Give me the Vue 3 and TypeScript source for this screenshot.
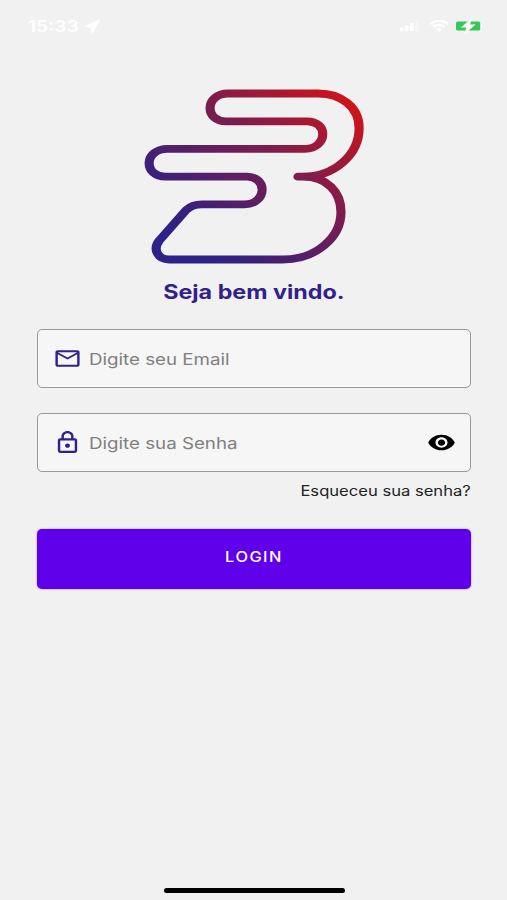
<script setup lang="ts">
import { ref } from 'vue'

const email = ref('')
const password = ref('')
const showPassword = ref(false)
</script>

<template>
  <main class="screen">
    <header class="status">
      <span class="time">15:33</span>
      <svg class="location" width="18" height="15" viewBox="0 0 16 13" aria-hidden="true">
        <path d="M15 .8 1 6.500l6.300.6.9 5.300z" fill="#fff" stroke="#fff" stroke-width=".8" stroke-linejoin="round" />
      </svg>
      <svg class="signal" width="19" height="12" viewBox="0 0 19 12" aria-hidden="true">
        <g fill="#fff">
          <rect x="0" y="7.5" width="3.6" height="3.7" rx=".8" />
          <rect x="5" y="5.5" width="3.6" height="5.7" rx=".8" />
          <rect x="10" y="3" width="3.6" height="8.2" rx=".8" />
          <rect x="15" y=".5" width="3.4" height="10.7" rx=".8" opacity=".35" />
        </g>
      </svg>
      <svg class="wifi" width="20" height="12" viewBox="0 0 20 12" aria-hidden="true">
        <g fill="none" stroke="#fff" stroke-width="2.4">
          <path d="M1 4.100C6-.2 14-.2 19 4.100" />
          <path d="M4.300 7c3.200-2.700 8.200-2.700 11.400 0" />
        </g>
        <path d="M7 9c1.800-1.300 4.200-1.300 6 0l-3 2.700z" fill="#fff" />
      </svg>
      <svg class="battery" width="28" height="14" viewBox="0 0 28 14" aria-hidden="true">
        <rect x="1" y="2.6" width="24.2" height="9" rx="1.5" fill="#34c85a" />
        <path d="M26.500 5v4" stroke="#fff" stroke-width="1.3" />
        <path d="M15.800.7 7.500 7.800h4.600L10.500 13.500l8.500-7.400h-4.700z" fill="#fff" stroke="#fff" stroke-width="1.2" />
      </svg>
    </header>

    <svg class="logo" viewBox="0 0 196.6 185" preserveAspectRatio="none" aria-label="B">
      <defs>
        <linearGradient id="brand" gradientUnits="userSpaceOnUse" x1="40" y1="165" x2="186" y2="20">
          <stop offset="0" stop-color="#2d2287" />
          <stop offset=".12" stop-color="#35217f" />
          <stop offset=".58" stop-color="#7d1c4e" />
          <stop offset="1" stop-color="#cf141a" />
        </linearGradient>
      </defs>
      <path
        d="M135 91.7H139C166 91.7 187.300 70 187.300 43C187.300 22 172 8.500 152 8.500H75.200C65.500 8.500 59.900 15.500 59.900 22.900C59.900 30.500 65.500 36.300 73.200 36.300H143C151 36.300 156.200 42 156.200 49C156.200 57 150.500 63.800 141 63.800H23.500C13.500 63.800 7.800 71 7.800 78C7.800 86 13.500 91.7 21.500 91.7H91.500C99.500 91.7 104.400 97.500 104.400 104.500C104.400 112.500 98.500 119.300 89.500 119.300H53C47 119.300 43 121 39.500 125L16.500 155.500C10.500 164.500 15.500 174.500 25 174.500H122C150 174.500 171.800 153 171.800 127C171.800 107 160 91.7 139 91.7"
        fill="none"
        stroke="url(#brand)"
        stroke-width="7.8"
        stroke-linecap="round"
        stroke-linejoin="round"
      />
    </svg>

    <h1 class="welcome"><span>Seja bem vindo.</span></h1>

    <form class="form" @submit.prevent>
      <label class="field">
        <svg class="icon" viewBox="0 0 24 24" preserveAspectRatio="none" aria-hidden="true">
          <path
            d="M22 6c0-1.100-.9-2-2-2H4c-1.100 0-2 .9-2 2v12c0 1.100.9 2 2 2h16c1.100 0 2-.9 2-2V6zm-2 0l-8 5-8-5h16zm0 12H4V8l8 5 8-5v10z"
            fill="#31218a"
          />
        </svg>
        <input v-model="email" class="email" type="email" placeholder="Digite seu Email" />
      </label>
      <label class="field">
        <svg class="icon" viewBox="0 0 24 24" preserveAspectRatio="none" aria-hidden="true">
          <path
            d="M18 8h-1V6c0-2.760-2.240-5-5-5S7 3.240 7 6v2H6c-1.100 0-2 .9-2 2v10c0 1.100.9 2 2 2h12c1.100 0 2-.9 2-2V10c0-1.100-.9-2-2-2zM9 6c0-1.660 1.340-3 3-3s3 1.340 3 3v2H9V6zm9 14H6V10h12v10zm-6-3c1.100 0 2-.9 2-2s-.9-2-2-2-2 .9-2 2 .9 2 2 2z"
            fill="#31218a"
          />
        </svg>
        <input
          v-model="password"
          class="password"
          :type="showPassword ? 'text' : 'password'"
          placeholder="Digite sua Senha"
        />
        <button class="reveal" type="button" @click="showPassword = !showPassword">
          <svg class="eye" viewBox="0 0 24 24" preserveAspectRatio="none" aria-hidden="true">
            <path
              d="M12 4.500C7 4.500 2.730 7.610 1 12c1.730 4.390 6 7.500 11 7.500s9.270-3.110 11-7.500c-1.730-4.390-6-7.500-11-7.500zM12 17c-2.760 0-5-2.240-5-5s2.240-5 5-5 5 2.240 5 5-2.240 5-5 5zm0-8c-1.660 0-3 1.340-3 3s1.340 3 3 3 3-1.340 3-3-1.340-3-3-3z"
              fill="#000"
            />
          </svg>
        </button>
      </label>
      <a class="forgot"><span>Esqueceu sua senha?</span></a>
      <button class="login" type="submit"><span>LOGIN</span></button>
    </form>

    <div class="home-bar"></div>
  </main>
</template>

<style>
body {
  margin: 0;
  background: #f1f1f1;
}
</style>

<style scoped>
.screen {
  box-sizing: border-box;
  display: flex;
  flex-direction: column;
  width: 507px;
  height: 900px;
  overflow: hidden;
  background: #f1f1f1;
  font-family: Inter, 'Liberation Sans', sans-serif;
}

.status {
  display: flex;
  align-items: center;
  box-sizing: border-box;
  height: 52px;
  flex: none;
  padding: 0 24px 0 28px;
}

.time {
  width: 55px;
  color: #fff;
  font-size: 16px;
  font-weight: 600;
  white-space: nowrap;
  transform: scaleX(1.2);
  transform-origin: left;
}

.signal {
  margin-left: auto;
}

.wifi {
  margin: 0 6px 0 10px;
}

.logo {
  flex: none;
  width: 230px;
  height: 185px;
  margin: 33px 0 0 140px;
}

.welcome {
  display: flex;
  justify-content: center;
  flex: none;
  height: 28px;
  margin: 8px 0 0;
  color: #31218a;
  font-size: 20px;
  font-weight: 700;
  line-height: 28px;
}

.welcome span {
  transform: scaleX(1.165);
  white-space: nowrap;
}

.form {
  display: flex;
  flex-direction: column;
  padding: 23px 36px 0 37px;
}

.field {
  display: flex;
  align-items: center;
  box-sizing: border-box;
  height: 59px;
  margin-bottom: 25px;
  padding: 0 14px 0 14.5px;
  border: 1px solid #999;
  border-radius: 5px;
  background: #f6f6f6;
}

.icon {
  flex: none;
  width: 29px;
  height: 25px;
}

.field input {
  flex: none;
  width: 260px;
  margin-left: 7.5px;
  padding: 1px 0 0;
  border: 0;
  outline: 0;
  background: transparent;
  color: #222;
  font: 400 16px Inter, 'Liberation Sans', sans-serif;
  transform: scaleX(1.17);
  transform-origin: left;
}

.field input::placeholder {
  color: #808080;
  opacity: 1;
}

.reveal {
  display: flex;
  margin-left: auto;
  padding: 0;
  border: 0;
  background: none;
}

.eye {
  width: 29px;
  height: 25px;
}

.forgot {
  align-self: flex-end;
  height: 20px;
  margin-top: -16px;
  color: #222;
  font-size: 14px;
  line-height: 20px;
}

.forgot span {
  display: block;
  transform: scaleX(1.185);
  transform-origin: right;
}

.login {
  height: 60px;
  margin-top: 28px;
  padding: 0 0 5px;
  border: 0;
  border-radius: 5px;
  background: #6000eb;
  box-shadow: 0 0 2px #a678e8;
  color: #fff;
  font: 500 14px Inter, 'Liberation Sans', sans-serif;
  letter-spacing: 1.25px;
}

.login span {
  display: block;
  transform: scaleX(1.17);
}

.home-bar {
  flex: none;
  width: 181px;
  height: 5px;
  margin: auto auto 7px 163.5px;
  border-radius: 3px;
  background: #000;
}
</style>
